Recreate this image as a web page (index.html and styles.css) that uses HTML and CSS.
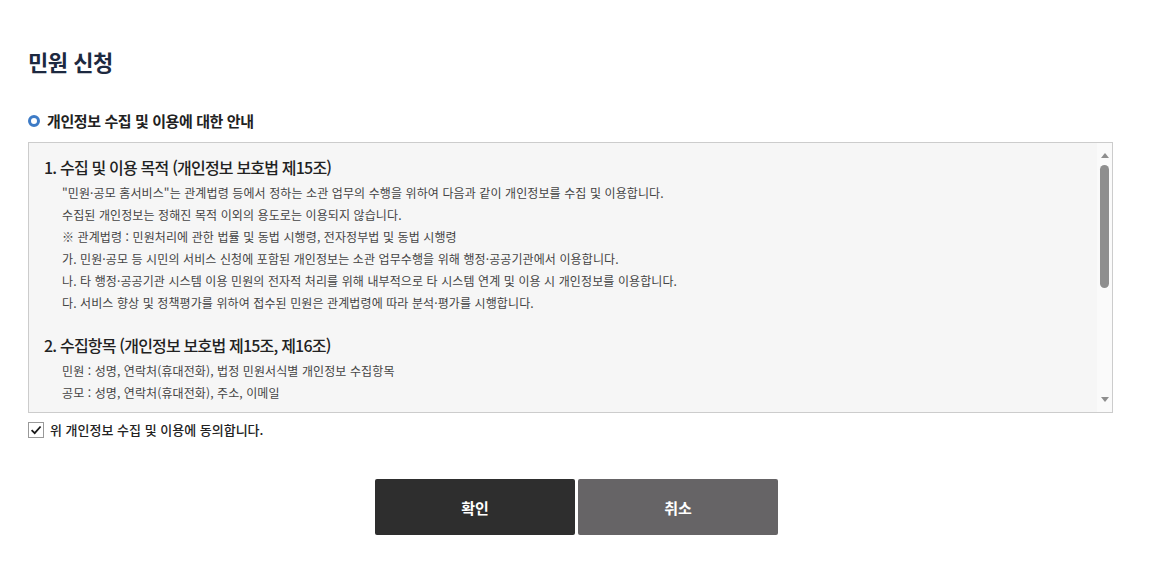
FILE: index.html
```html
<!DOCTYPE html>
<html lang="ko">
<head>
    <meta charset="UTF-8">
    <meta name="viewport" content="width=device-width, initial-scale=1.0">
    <title>민원 신청</title>
    <link rel="stylesheet" href="styles.css">
</head>
<body>
    <div class="page">
        <h2 class="title">민원 신청</h2>

        <h3 class="sub-title"><span class="dot"></span>개인정보 수집 및 이용에 대한 안내</h3>

        <div class="terms-box">
            <div class="terms-content">
                <div class="terms-section">
                    <h4>1. 수집 및 이용 목적 (개인정보 보호법 제15조)</h4>
                    <p>"민원·공모 홈서비스"는 관계법령 등에서 정하는 소관 업무의 수행을 위하여 다음과 같이 개인정보를 수집 및 이용합니다.</p>
                    <p>수집된 개인정보는 정해진 목적 이외의 용도로는 이용되지 않습니다.</p>
                    <p>※ 관계법령 : 민원처리에 관한 법률 및 동법 시행령, 전자정부법 및 동법 시행령</p>
                    <p>가. 민원·공모 등 시민의 서비스 신청에 포함된 개인정보는 소관 업무수행을 위해 행정·공공기관에서 이용합니다.</p>
                    <p>나. 타 행정·공공기관 시스템 이용 민원의 전자적 처리를 위해 내부적으로 타 시스템 연계 및 이용 시 개인정보를 이용합니다.</p>
                    <p>다. 서비스 향상 및 정책평가를 위하여 접수된 민원은 관계법령에 따라 분석·평가를 시행합니다.</p>
                </div>
                <div class="terms-section">
                    <h4>2. 수집항목 (개인정보 보호법 제15조, 제16조)</h4>
                    <p>민원 : 성명, 연락처(휴대전화), 법정 민원서식별 개인정보 수집항목</p>
                    <p>공모 : 성명, 연락처(휴대전화), 주소, 이메일</p>
                </div>
            </div>
            <!-- scrollbar look of the original box -->
            <div class="scrollbar">
                <span class="arrow arrow-up"></span>
                <span class="thumb"></span>
                <span class="arrow arrow-down"></span>
            </div>
        </div>

        <label class="agree">
            <span class="check-box">
                <svg width="12" height="12" viewBox="0 0 12 12"><path d="M1.6 6.1 L4.7 9.1 L10.6 2.5" fill="none" stroke="#1a1a1a" stroke-width="1.8"/></svg>
            </span>
            위 개인정보 수집 및 이용에 동의합니다.
        </label>

        <div class="btn-area">
            <a href="#" class="btn btn-ok">확인</a>
            <a href="#" class="btn btn-cancel">취소</a>
        </div>
    </div>
</body>
</html>
```

FILE: styles.css
```css
body {
    margin: 0;
    padding: 0;
    background: #fff;
    font-family: 'Noto Sans CJK KR', 'Noto Sans', sans-serif;
    color: #333;
}

.page {
    padding: 45px 46px 0 28px;
}

.title {
    margin: 0;
    font-size: 22px;
    line-height: 32px;
    font-weight: bold;
    color: #1d2940;
    letter-spacing: -0.5px;
}

.sub-title {
    display: flex;
    align-items: center;
    margin: 33px 0 10px;
    font-size: 15px;
    line-height: 22px;
    font-weight: bold;
    color: #222;
    letter-spacing: -0.4px;
}

.dot {
    width: 6px;
    height: 6px;
    border: 3.5px solid #3d7bc6;
    border-radius: 50%;
    margin-right: 7px;
}

/* terms box */
.terms-box {
    display: flex;
    height: 271px;
    box-sizing: border-box;
    border: 1px solid #cccccc;
    background: #f6f6f6;
}

.terms-content {
    flex: 1;
    overflow: hidden;
    padding: 11px 15px 0;
}

.scrollbar {
    display: flex;
    flex-direction: column;
    align-items: center;
    width: 15px;
    background: #fafafa;
}

.arrow {
    width: 0;
    height: 0;
    border-left: 4px solid transparent;
    border-right: 4px solid transparent;
}

.arrow-up {
    margin-top: 10px;
    border-bottom: 5px solid #8e8e8e;
}

.arrow-down {
    margin-top: auto;
    margin-bottom: 10px;
    border-top: 5px solid #8e8e8e;
}

.thumb {
    width: 9px;
    height: 123px;
    margin-top: 7px;
    border-radius: 5px;
    background: #8e8e8e;
}

.terms-section {
    margin-bottom: 18px;
}

.terms-section h4 {
    margin: 0 0 2px;
    font-size: 16px;
    line-height: 26px;
    font-weight: 500;
    color: #222;
    letter-spacing: -0.8px;
}

.terms-section p {
    margin: 0;
    padding-left: 18px;
    font-size: 12px;
    line-height: 22px;
    color: #444;
    letter-spacing: 0.1px;
}

.agree {
    display: flex;
    align-items: center;
    margin-top: 9px;
    font-size: 13px;
    line-height: 16px;
    font-weight: 500;
    color: #222;
}

.check-box {
    display: flex;
    align-items: center;
    justify-content: center;
    width: 14px;
    height: 14px;
    border: 1px solid #999;
    background: #fff;
    margin-right: 6px;
}

.btn-area {
    display: flex;
    justify-content: center;
    gap: 3px;
    margin-top: 41px;
    padding-left: 12px;
}

.btn {
    display: flex;
    align-items: center;
    justify-content: center;
    width: 200px;
    height: 56px;
    border-radius: 2px;
    color: #fff;
    font-size: 15px;
    font-weight: bold;
    text-decoration: none;
}

.btn-ok {
    background: #2e2e2e;
}

.btn-cancel {
    background: #666466;
}
```
